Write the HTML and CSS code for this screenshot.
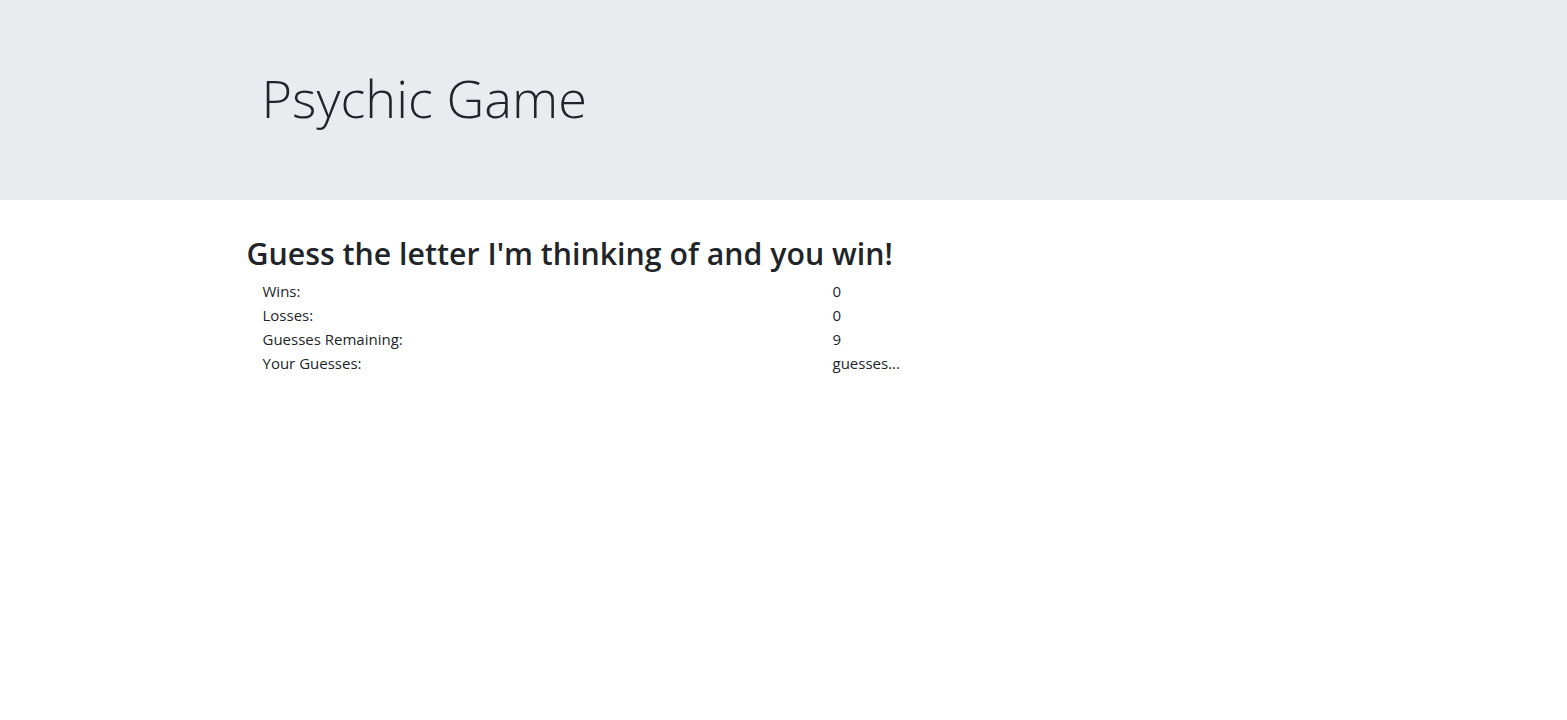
FILE: index.html
```html
<!DOCTYPE html>
<html lang="en">
<head>
<meta charset="utf-8">
<title>Psychic Game</title>
<link rel="stylesheet" href="styles.css">
</head>
<body>
<div class="jumbotron">
  <div class="container">
    <h1 class="display">Psychic Game</h1>
  </div>
</div>
<div class="container">
  <h2 class="lead">Guess the letter I'm thinking of and you win!</h2>
  <div class="stats">
    <div class="row"><div class="label">Wins:</div><div class="value">0</div></div>
    <div class="row"><div class="label">Losses:</div><div class="value">0</div></div>
    <div class="row"><div class="label">Guesses Remaining:</div><div class="value">9</div></div>
    <div class="row"><div class="label">Your Guesses:</div><div class="value">guesses...</div></div>
  </div>
</div>
</body>
</html>
```
FILE: styles.css
```css
* { box-sizing: border-box; }
html, body { margin: 0; padding: 0; }
body {
  font-family: "Segoe UI", "Open Sans", "Noto Sans", sans-serif;
  font-size: 15px;
  line-height: 24px;
  color: #212529;
  background: #fff;
}
.jumbotron {
  background: #e9ecef;
  height: 200px;
  padding-top: 64px;
  margin-bottom: 35px;
}
.container {
  width: 1140px;
  margin: 0 auto;
  padding: 0 15px;
}
.display {
  margin: 0 0 0 33px;
  font-size: 52.3px;
  font-weight: 300;
  line-height: 67px;
}
.lead {
  margin: 3px 0 6px 18px;
  font-size: 30.3px;
  font-weight: 600;
  line-height: 38px;
}
.stats {
  padding-left: 34px;
}
.row {
  display: grid;
  grid-template-columns: 570px 1fr;
  height: 24px;
}
```
